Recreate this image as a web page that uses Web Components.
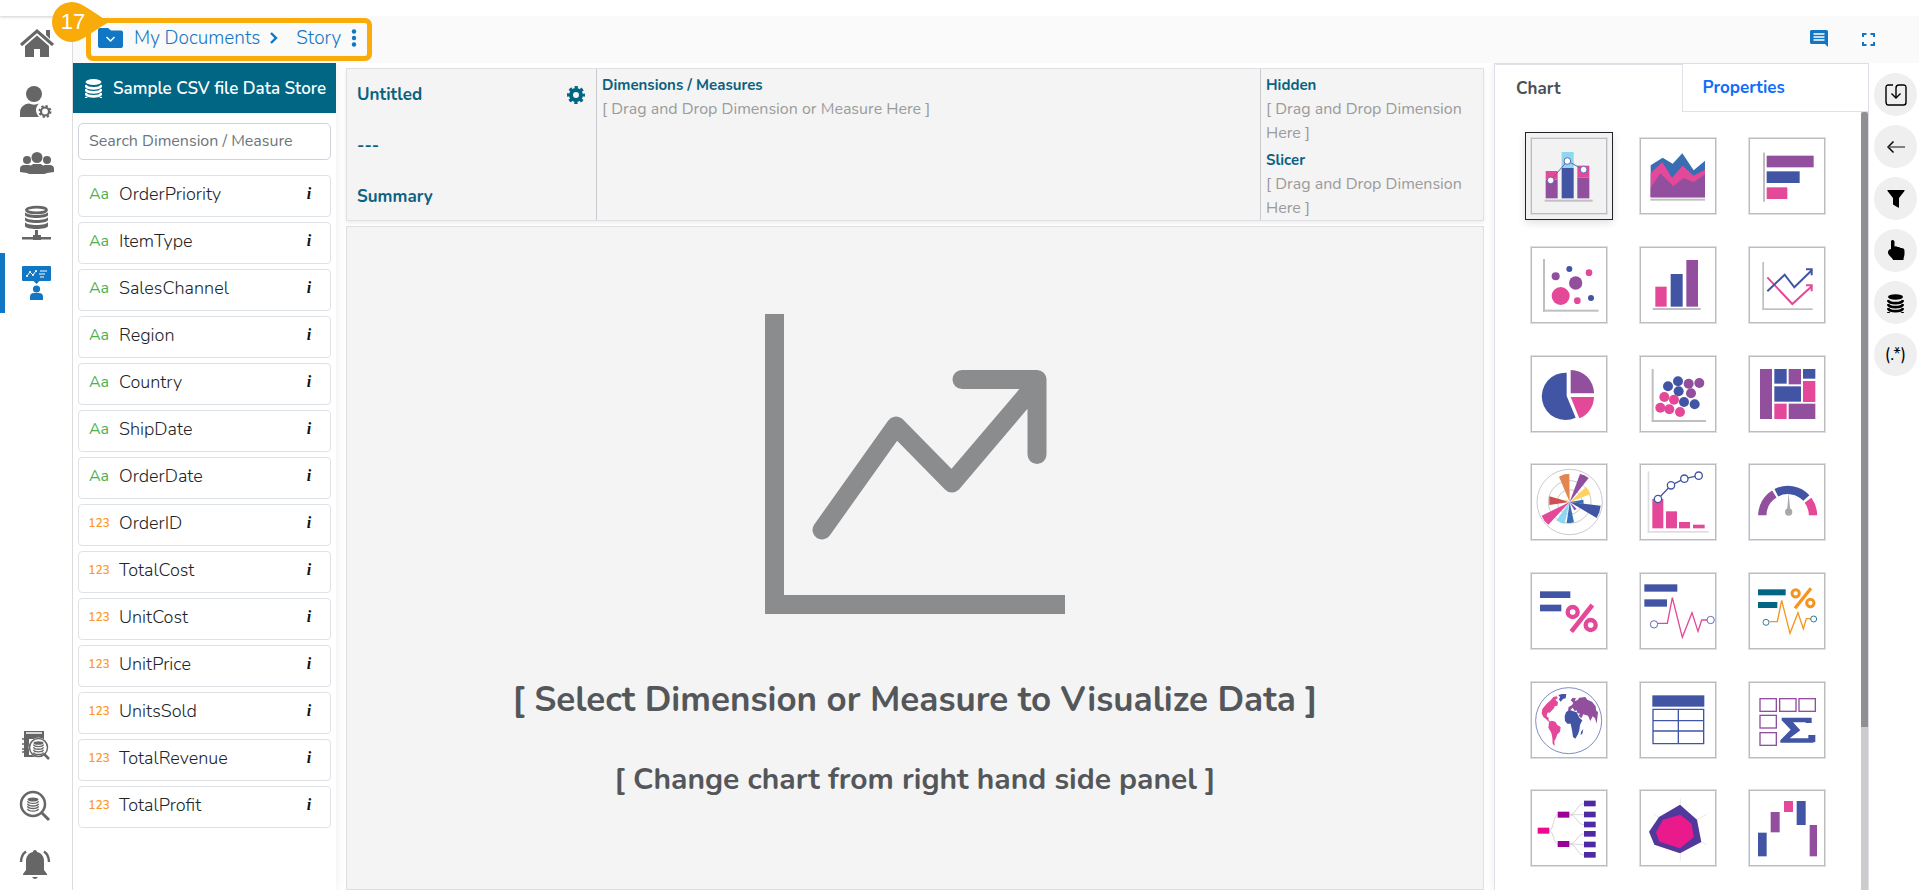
<!DOCTYPE html>
<html lang="en">
<head>
<meta charset="utf-8">
<title>Story designer</title>
<style>
  html, body { margin: 0; height: 100%; }
  body { font-family: Nunito, "Open Sans", "Noto Sans", sans-serif; font-size: 16px; color: #212529; background: #fff; overflow: hidden; }
</style>
</head>
<body>
<story-app></story-app>

<script>
const GREY = '#666';
const BLUE = '#1177c4';

/* Base class: clones the markup of each element into an open shadow root. */
class Base extends HTMLElement {
  constructor() { super(); this.attachShadow({ mode: 'open' }); }
  connectedCallback() {
    const t = document.createElement('template');
    t.innerHTML = '<style>*{box-sizing:border-box}button{font:inherit;color:inherit;background:none;border:0;padding:0;cursor:pointer}svg{display:block}' + this.css() + '</style>' + this.html();
    this.shadowRoot.replaceChildren(t.content.cloneNode(true));
  }
  css() { return ''; }
  html() { return '<slot></slot>'; }
}
const stack = (x, y, w, gap, n, c, sw) => {
  let s = `<ellipse cx="${x}" cy="${y}" rx="${w}" ry="${w * .36}" fill="${c}"/>`;
  for (let i = 1; i <= n; i++) s += `<path d="M${x - w} ${y + gap * i - 1}c1 ${w * .55} ${2 * w - 1} ${w * .55} ${2 * w} 0" fill="none" stroke="${c}" stroke-width="${sw}"/>`;
  return s;
};

/* ---------- left navigation ---------- */
class NavItem extends Base {
  css() { return `:host{display:block;height:var(--cell,60px)}
    button{width:100%;height:100%;display:flex;align-items:center;justify-content:center;border-left:5px solid transparent;border-right:5px solid transparent}
    :host([active]) button{border-left-color:${BLUE}}`; }
  html() { return `<button type="button" aria-label="${this.getAttribute('label')}"><slot></slot></button>`; }
}
class SideNav extends Base {
  css() { return `:host{display:flex;flex-direction:column;justify-content:space-between;width:73px;border-right:1px solid #dcdcdc;background:#fff}
    nav{display:flex;flex-direction:column}
    .top{margin-top:-3px}
    .bottom{--cell:50px;gap:10px}
    svg{width:36px;height:36px}`; }
  html() { return `
    <nav class="top" aria-label="Main">
      <nav-item label="Home"><svg viewBox="0 0 36 36" fill="${GREY}"><path d="M28 5h4v9l-4-4z"/><path d="M3 20 19 6l16 14" fill="none" stroke="${GREY}" stroke-width="3"/><path d="M7 21 19 10.500l12 10.500v11h-9v-8h-6v8H7z"/></svg></nav-item>
      <nav-item label="User settings"><svg viewBox="0 0 36 36" fill="${GREY}"><circle cx="16" cy="9" r="8"/><path d="M2 32v-4c0-6 4-9 9-9.500 3 1.500 7 1.500 10 0-4 4-4 9 0 13.500z"/><circle cx="27" cy="26.500" r="4" fill="none" stroke="${GREY}" stroke-width="2.200"/><circle cx="27" cy="26.500" r="5.500" fill="none" stroke="${GREY}" stroke-width="2" stroke-dasharray="2.300 2"/></svg></nav-item>
      <nav-item label="Groups"><svg viewBox="0 0 36 36" fill="${GREY}"><circle cx="19" cy="12.500" r="5.500"/><circle cx="9" cy="15" r="4"/><circle cx="29" cy="15" r="4"/><path d="M2 27v-3c0-3 2-4 4-4h5c2 1 3 0 4-1h8c1 1 2 2 4 1h5c2 0 4 1 4 4v3l-7 1c-1 1-3 1-10 1s-9 0-10-1z"/></svg></nav-item>
      <nav-item label="Data sources"><svg viewBox="0 0 36 36" fill="${GREY}"><ellipse cx="18.500" cy="5" rx="10" ry="2.800" fill="#fff" stroke="${GREY}" stroke-width="2.800"/>
        <path d="M7 7c1 4 22 4 23 0v3c0 4-23 4-23 0zM7 12c1 4 22 4 23 0v3c0 4-23 4-23 0zM7 17c1 4 22 4 23 0v4c0 4-23 4-23 0z"/><path d="M17 25h3v5h3v2h10v2.500h-10V35h-8v-.5H4V32h11v-2h2z"/></svg></nav-item>
      <nav-item label="Story" active><svg viewBox="0 0 36 36" fill="${BLUE}"><path d="M5 1h27q1 0 1 1v13q0 1-1 1H21.500l-3 3-3-3H5q-1 0-1-1V2q0-1 1-1z"/><path d="m9 11 3-4 3 3 3-4m4 0h7m-8 3h6m-5 3h4" fill="none" stroke="#fff"/><circle cx="9" cy="11" r="1" fill="#fff"/><circle cx="12" cy="7" r="1" fill="#fff"/><circle cx="15" cy="10" r="1" fill="#fff"/><circle cx="18" cy="6" r="1" fill="#fff"/><circle cx="18.500" cy="24" r="3.600"/><path d="M12 35v-3q0-4 4-4h5q4 0 4 4v3z"/></svg></nav-item>
    </nav>
    <nav class="bottom" aria-label="Tools">
      <nav-item label="Data catalog"><svg viewBox="0 0 36 36" fill="${GREY}"><path d="M6 4h20v8H10v18H6z"/><path d="M8 6h16" stroke="#fff" stroke-width="1.500"/><path d="M7 28h12v2H7zM6 10h5v18H6z"/><g fill="none" stroke="${GREY}" stroke-width="1.600"><path d="M4 12h5M4 17h5M4 22h5M4 25h5"/></g><circle cx="20.500" cy="20.500" r="10" fill="#fff"/><circle cx="20.500" cy="20.500" r="9" fill="#fff" stroke="${GREY}" stroke-width="1.500"/><path d="m26 27 5 5" stroke="${GREY}" stroke-width="2.500"/>${stack(20.5, 16, 5, 2.6, 4, GREY, 1.4)}</svg></nav-item>
      <nav-item label="Data search"><svg viewBox="0 0 36 36"><circle cx="15" cy="17" r="12" fill="none" stroke="${GREY}" stroke-width="2.500"/><path d="m24 26 7 7" stroke="${GREY}" stroke-width="3"/>${stack(15, 12.5, 5.5, 2.6, 4, GREY, 1.4)}</svg></nav-item>
      <nav-item label="Notifications"><svg viewBox="0 0 36 36" fill="${GREY}"><path d="M17 3c1.500 0 2 1 2 2 5 1 7 5 7 9v9l3 4v1H5v-1l3-4v-9c0-4 2-8 7-9 0-1 .5-2 2-2zM14 30h6q-3 4-6 0z"/><path d="M3 15q0-7 5-10.500M31 15q0-7-5-10.500" fill="none" stroke="${GREY}" stroke-width="2.400"/></svg></nav-item>
    </nav>`; }
}

/* ---------- breadcrumb bar ---------- */
class StepCallout extends Base {
  css() { return `:host{display:block;position:relative;border:5px solid #f8ab09;border-radius:7px}
    .pin{position:absolute;left:-43px;top:-22px;width:62px;height:42px}
    .pin svg{position:absolute;inset:0}
    .pin span{position:relative;display:block;width:50px;line-height:42px;text-align:center;font-family:"Liberation Sans",Arial,sans-serif;font-size:22px;color:#fff}`; }
  html() { return `<slot></slot><div class="pin"><svg viewBox="0 0 62 42" width="62" height="42"><path d="M24 1C34 1 46 12 61 21 46 29 34 41 24 41a20 20 0 0 1 0-40z" fill="#f8ab09"/></svg><span>${this.getAttribute('step')}</span></div>`; }
}
class CrumbBar extends Base {
  css() { return `:host{display:flex;align-items:flex-start;justify-content:space-between;height:47px;padding:2px 44px 0 13px;background:#fafafa;color:${BLUE}}
    nav{display:flex;align-items:center;height:33px;padding:0 9px 4px 7px;font-size:19px;font-weight:300;line-height:24px}
    a{color:inherit;text-decoration:none}
    .folder{margin-right:11px}.chev{margin:0 18px 0 10px}.more{margin-left:9px}
    .tools{display:flex;gap:34px;padding-top:12px}`; }
  html() { return `
    <step-callout step="17"><nav aria-label="Breadcrumb">
      <svg class="folder" width="25" height="20" viewBox="0 0 25 20"><path d="M2 0h8l3 2.500h10q2 0 2 2V18q0 2-2 2H2q-2 0-2-2V2q0-2 2-2z" fill="${BLUE}"/><path d="m8.500 9 4 4 4-4" fill="none" stroke="#fff" stroke-width="1.500"/></svg>
      <a href="#documents">My Documents</a>
      <svg class="chev" width="8" height="12" viewBox="0 0 8 12"><path d="m1 1 5 5-5 5" fill="none" stroke="${BLUE}" stroke-width="2.400"/></svg>
      <a href="#story">Story</a>
      <button class="more" type="button" aria-label="More"><svg width="8" height="18" viewBox="0 0 8 18" fill="${BLUE}"><circle cx="4" cy="2.500" r="2.200"/><circle cx="4" cy="9" r="2.200"/><circle cx="4" cy="15.500" r="2.200"/></svg></button>
    </nav></step-callout>
    <div class="tools">
      <button type="button" aria-label="Comments"><svg width="18" height="18" viewBox="0 0 18 18"><path d="M1.500 0h15q1.500 0 1.500 1.500V17l-3-3H1.500Q0 14 0 12.500v-11Q0 0 1.500 0z" fill="${BLUE}"/><path d="M3.500 4h11M3.500 7h11M3.500 10h11" stroke="#fff" stroke-width="1.300"/></svg></button>
      <button type="button" aria-label="Full screen"><svg width="13" height="17" viewBox="0 0 13 17"><path d="M1 6V3h3.500M8.500 3H12v3M12 11v3H8.500M4.500 14H1v-3" fill="none" stroke="${BLUE}" stroke-width="2"/></svg></button>
    </div>`; }
}

/* ---------- data store fields ---------- */
class FieldItem extends Base {
  css() { return `:host{display:grid;grid-template-columns:40px 1fr 30px;height:42px;border:1px solid #dee2e6;border-radius:4px;background:#fff;line-height:24px;padding-top:6px;align-items:start}
    .type{text-align:center;color:#4caf50;font-size:16px}
    .type.num{color:#fd9727;font-size:12px;font-weight:600}
    .name{font-size:18px;font-weight:300}
    button{width:18px;height:24px;font:italic bold 16px/24px "Liberation Serif",serif;color:#111}`; }
  html() { const num = this.getAttribute('type') === '123';
    return `<span class="type ${num ? 'num' : ''}">${this.getAttribute('type')}</span><span class="name"><slot></slot></span><button type="button" aria-label="Field info">i</button>`; }
}
class FieldPanel extends Base {
  css() { return `:host{display:block;width:263px;background:#fff;box-shadow:0 0 10px rgba(0,0,0,.08)}
    h2{display:flex;align-items:center;height:50px;margin:0;padding-left:12px;gap:11px;background:#006684;color:#fff;font-size:17px;font-weight:600;white-space:nowrap}
    .body{display:flex;flex-direction:column;gap:5px;padding:10px 5px 0}
    input{width:100%;height:37px;margin-bottom:10px;padding:0 10px 2px;border:1px solid #ced4da;border-radius:5px;font:inherit;font-size:16px;outline:0}
    input::placeholder{color:#6c757d;opacity:1}`; }
  html() {
    const dims = ['OrderPriority', 'ItemType', 'SalesChannel', 'Region', 'Country', 'ShipDate', 'OrderDate'];
    const nums = ['OrderID', 'TotalCost', 'UnitCost', 'UnitPrice', 'UnitsSold', 'TotalRevenue', 'TotalProfit'];
    return `<h2><svg width="17" height="20" viewBox="0 0 17 20">${stack(8.500, 4, 8, 4, 4, '#fff', 2.8)}</svg>Sample CSV file Data Store</h2>
    <div class="body"><input type="search" aria-label="Search Dimension / Measure" placeholder="Search Dimension / Measure">
    ${dims.map(n => `<field-item type="Aa">${n}</field-item>`).join('')}${nums.map(n => `<field-item type="123">${n}</field-item>`).join('')}</div>`; }
}

/* ---------- chart configuration ---------- */
class DropZone extends Base {
  css() { return `:host{display:block;line-height:24px}
    h3{margin:0;font-size:15px;font-weight:700;color:#0b6180;line-height:24px}
    p{margin:0;font-size:16px;color:#9b9b9b}`; }
  html() { return `<h3>${this.getAttribute('label')}</h3><p><slot></slot></p>`; }
}
class ConfigPanel extends Base {
  css() { return `:host{display:grid;grid-template-columns:249px 1fr 223px;height:153px;border:1px solid #dee2e6;background:#f4f4f4;box-shadow:0 2px 4px rgba(0,0,0,.08)}
    section{border-left:1px solid #c9cacc;padding:4px 0 0 5px;min-width:0}
    .summary{border:0;padding:14px 10px 0 10px;display:flex;flex-direction:column;gap:27px;color:#0b6180;font-size:17px;font-weight:700;line-height:24px}
    .row{display:flex;justify-content:space-between;align-items:center}
    drop-zone + drop-zone{margin-top:3px}`; }
  html() { return `
    <section class="summary"><div class="row"><span>Untitled</span><button type="button" aria-label="Settings"><svg width="20" height="20" viewBox="0 0 20 20" fill="none" stroke="#006684"><circle cx="10" cy="10" r="5" stroke-width="4"/><circle cx="10" cy="10" r="7.500" stroke-width="3" stroke-dasharray="3.200 2.690" stroke-dashoffset="1.600"/></svg></button></div><span>---</span><span>Summary</span></section>
    <section><drop-zone label="Dimensions / Measures">[ Drag and Drop Dimension or Measure Here ]</drop-zone></section>
    <section><drop-zone label="Hidden">[ Drag and Drop Dimension Here ]</drop-zone><drop-zone label="Slicer">[ Drag and Drop Dimension Here ]</drop-zone></section>`; }
}
class ChartCanvas extends Base {
  css() { return `:host{display:flex;flex-direction:column;align-items:center;flex:1;min-height:0;border:1px solid #dcdfe3;background:#f4f4f4;color:#54575a;text-align:center;padding-top:87px}
    p{margin:0;font-weight:700}
    .big{margin-top:62px;font-size:35px;line-height:48px}
    .small{margin-top:34px;font-size:30px;line-height:44px}`; }
  html() { return `
    <svg width="300" height="300" viewBox="0 0 300 300" fill="none" stroke="#8b8c8e" stroke-width="19"><path d="M9.500 0v290.500H300"/><path d="m57 216 74-104 56 57 85-100M197 65.500h75v75" stroke-linecap="round" stroke-linejoin="round"/></svg>
    <p class="big">[ Select Dimension or Measure to Visualize Data ]</p>
    <p class="small">[ Change chart from right hand side panel ]</p>`; }
}

/* ---------- chart picker ---------- */
const B = '#4255a4', V = '#914f9e', P = '#e44898', M = '#3b6db3', L = '#8fd6f1', T = '#006684', O = '#f7941e', G = '#bfbfbf';
const r = (x, y, w, h, c) => `<rect x="${x}" y="${y}" width="${w}" height="${h}" fill="${c}"/>`;
const c = (pts, rad, col) => pts.map(p => `<circle cx="${p[0]}" cy="${p[1]}" r="${rad}" fill="${col}"/>`).join('');
const o = (pts, rad, col, w) => pts.map(p => `<circle cx="${p[0]}" cy="${p[1]}" r="${rad}" fill="#fff" stroke="${col}" stroke-width="${w}"/>`).join('');
const pg = (pts, col) => `<polygon points="${pts}" fill="${col}"/>`;
const pl = (pts, col, w) => `<polyline points="${pts}" fill="none" stroke="${col}" stroke-width="${w}"/>`;
const wedge = (pts, col) => pg('119,117 ' + pts, col);
const link = (x1, y1, x2, y2) => `<path d="M${x1} ${y1}C${(x1 + x2) / 2} ${y1} ${(x1 + x2) / 2} ${y2} ${x2} ${y2}" fill="none" stroke="#d4d4d4" stroke-width="3"/>`;
const CHARTS = [
  ['Combination', r(47,102,36,26,P)+r(47,128,36,56,V)+r(95,45,36,48,L)+r(95,93,36,91,B)+r(142,86,36,36,P)+r(142,122,36,62,V)+r(44,188,144,6,G)+pl('62,130 112,72 161,98','#5a6ab0',3)+o([[62,130],[112,72],[161,98]],10,'#5a6ab0',3)],
  ['Area', pg('35,85 71,62 101,80 130,49 164,100 198,71 198,181 35,181',M)+pg('35,108 70,76 99,122 131,86 164,116 198,98 198,181 35,181',P)+pg('35,152 64,109 103,148 134,123 164,136 198,112 198,181 35,181',V)+r(34,185,164,6,G)],
  ['Bar', r(45,47,6,147,G)+r(56,56,141,35,V)+r(56,103,99,35,B)+r(56,151,62,35,P)],
  ['Bubble', r(39,39,6,158,G)+r(39,191,167,6,G)+c([[77,91]],12,V)+c([[118,69],[183,156]],9,B)+c([[177,80],[142,164]],10,P)+c([[137,111]],20,V)+c([[92,150]],27,P)],
  ['Column', r(49,122,34,60,P)+r(95,84,36,98,B)+r(142,42,35,140,V)+r(41,186,144,6,G)],
  ['Line', r(43,48,5,143,G)+r(43,187,151,5,G)+pl('58,94 133,174 192,120',P,6)+pl('174,118 191,118 191,136',P,6)+pl('58,136 110,86 139,124 192,72',B,6)+pl('174,70 191,70 191,88',B,6)],
  ['Pie', `<path d="M110 53A71 71 0 1 0 137 188L110 123z" fill="${B}"/><path d="M122 45a70 70 0 0 1 70 70h-70z" fill="${V}"/><path d="M122 126h70a70 70 0 0 1-44 64z" fill="${P}"/>`],
  ['Scatter', r(38,42,6,158,G)+r(38,195,163,6,G)+c([[87,94],[117,79],[119,109],[135,141],[167,148]],15,B)+c([[149,86],[181,84],[156,115]],15,V)+c([[76,126],[105,134],[64,158],[91,163],[123,171]],15,P)],
  ['Tree map', r(36,42,36,150,V)+r(79,42,37,44,B)+r(122,42,37,46,V)+r(165,42,37,29,B)+r(165,78,37,63,P)+r(79,94,80,46,B)+r(79,146,37,46,P)+r(122,146,80,46,V)],
  ['Rose', o([[119,117]],98,G,2.5)+o([[119,117]],64,G,2.5)+o([[119,117]],37,G,2.5)+wedge('87,41 103,34 118,33','#e38550')+wedge('150,33 163,37 176,45',V)+wedge('168,72 176,82 181,94','#ffd162')+wedge('160,110 161,122',M)+wedge('212,128 208,148 200,165',B)+wedge('133,142 140,138',V)+wedge('79,172 92,179 104,182',L)+wedge('110,180 121,180 132,178',M)+wedge('35,158 43,173 55,185',P)+wedge('58,100 58,126','#cf4e50')+wedge('106,108 110,118','#ffd162')],
  ['Pareto', r(26,25,5,185,'#ddd')+r(26,204,183,5,'#ddd')+r(40,108,33,88,P)+r(81,145,33,51,P)+r(120,177,33,19,P)+r(162,185,35,11,P)+pl('57,108 96,67 136,47 179,38',B,4)+o([[57,108],[96,67],[136,47],[179,38]],11,B,4)],
  ['Gauge', `<g fill="none" stroke-width="25"><path d="M43 157A76 76 0 0 1 79 93" stroke="${V}"/><path d="M85 89A76 76 0 0 1 175 105" stroke="${B}"/><path d="M180 112A76 76 0 0 1 195 157" stroke="${P}"/></g>`+pg('122,90 117,145 127,145','#a7a9ac')+c([[122,147]],11,'#a7a9ac')],
  ['Percent KPI', r(30,58,91,20,B)+r(30,98,64,20,B)+o([[128,120],[182,159]],15,P,13)+pl('187,99 124,179',P,14)],
  ['Trend KPI', r(16,37,99,22,B)+r(16,82,68,22,B)+pl('56,154 85,154 100,77 130,196 159,122 177,178 188,144 204,144',P,4)+o([[45,157],[215,144]],11,B,2.5)],
  ['Multi KPI', r(30,52,83,18,T)+r(30,90,58,18,T)+o([[143,64],[187,93]],11,O,9)+pl('189,49 141,109',O,10)+pl('65,149 88,149 101,85 126,184 150,122 166,170 175,140 188,140',O,4)+o([[54,151],[197,141]],9,T,2.5)],
  ['World map', `<circle cx="116" cy="119" r="99" fill="none" stroke="${B}" stroke-width="2"/>`+pg('85,42 96,39 109,39 107,52 99,54 92,62 87,56 90,48',B)+pg('35,97 37,84 50,68 62,58 70,48 80,46 83,52 76,56 84,64 82,74 74,76 72,82 64,90 58,96 54,94 50,102 52,108 56,110 56,118 63,122 56,122 48,114 40,108',P)+pg('57,124 65,119 76,122 82,132 92,138 90,152 82,160 78,172 73,180 74,195 68,188 67,170 64,156 55,140',P)+pg('108,94 118,86 128,90 140,94 148,110 157,118 150,132 148,148 144,160 136,173 129,168 126,148 122,128 112,128 105,120 104,106',B)+pg('153,152 160,144 157,158 152,162',B)+pg('122,58 128,50 138,52 134,60 142,58 148,50 166,48 172,56 186,62 197,76 198,88 204,94 202,110 200,128 195,112 188,106 181,120 174,104 160,100 154,112 146,104 150,98 142,96 140,88 134,90 128,80 118,90 114,88 116,78 126,72 130,66',V)],
  ['Table', r(40,43,156,34,B)+`<path d="M42 85h152v103H42zM42 119h152M42 150h152M118 85v103" fill="none" stroke="${B}" stroke-width="4"/>`],
  ['Pivot', [[36,53],[95,53],[153,53],[36,103],[36,155]].map(p => `<rect x="${p[0]}" y="${p[1]}" width="49" height="38" fill="none" stroke="${V}" stroke-width="4"/>`).join('')+pg('101,110 191,110 191,126 174,126 172,124 135,124 157,148 125,172 181,172 181,162 202,162 202,182 194,185 97,185 97,178 128,146 101,118',B)],
  ['Decomposition tree', link(58,125,83,77)+link(58,125,83,165)+[44,77,107].map(y => link(118,77,162,y)).join('')+[135,167,198].map(y => link(118,165,162,y)).join('')+r(23,116,35,18,'#ec0a92')+r(83,68,35,18,'#9c0099')+r(83,156,35,18,'#9c0099')+[35,68,98,126,158,189].map(y => r(162,y,35,17,'#4d29a3')).join('')],
  ['Radar', `<path d="M124 28v187M43 75l160 93M204 75 124 120" stroke="#ddd" stroke-width="2"/>`+pg('123,47 174,92 187,159 123,193 46,167 30,128 60,84','#50399a')+pg('124,77 158,104 164,145 123,178 61,158 51,130 72,92','#e91a8c')],
  ['Waterfall', r(30,131,26,71,B)+r(68,69,27,61,V)+r(108,36,27,33,P)+r(146,36,27,72,B)+r(185,108,22,94,V)]
];
class ChartTile extends Base {
  css() { return `:host{display:flex;align-items:center;justify-content:center;aspect-ratio:1}
    button{width:88px;height:88px;display:grid;place-items:center;border:1px solid transparent}
    span{display:grid;place-items:center;width:78px;height:78px;border:1px solid #dcdfe3;box-shadow:inset 0 0 0 1px #bcbcbe}
    ::slotted(svg){margin:-1px}
    :host([selected]) button{border-color:#212529;background:#f2f2f2;box-shadow:0 3px 8px rgba(0,0,0,.12)}`; }
  html() { return `<button type="button" aria-label="${this.getAttribute('label')}"><span><slot></slot></span></button>`; }
}
class ChartPicker extends Base {
  css() { return `:host{display:flex;flex-direction:column;width:375px;border:1px solid #dcdfe5;border-bottom:0;background:#fff;box-shadow:0 0 10px rgba(0,0,0,.08)}
    .tabs{display:grid;grid-template-columns:1fr 1fr;height:48px}
    .tabs button{padding:0 0 0 20px;text-align:left;font-size:17px;font-weight:700;color:#0d6efd;border-left:1px solid #dee2e6;border-bottom:1px solid #dee2e6}
    .tabs button[aria-selected=true]{color:#495057;border-left-color:transparent;border-bottom:0;border-top:1px solid #dee2e6}
    .scroll{flex:1;min-height:0;display:flex}
    .grid{flex:1;display:grid;grid-template-columns:repeat(3,1fr);align-content:start;padding:10px 20px 0;overflow:hidden}
    .bar{width:7px;background:#ccc}
    .bar div{height:79%;background:#909090;border-radius:3px 3px 0 0}
    svg{width:78px;height:78px}`; }
  html() { return `<div class="tabs" role="tablist"><button type="button" role="tab" aria-selected="true">Chart</button><button type="button" role="tab" aria-selected="false">Properties</button></div>
    <div class="scroll"><div class="grid">${CHARTS.map((d, i) => `<chart-tile label="${d[0]}"${i ? '' : ' selected'}><svg viewBox="0 0 234 234">${d[1]}</svg></chart-tile>`).join('')}</div><div class="bar"><div></div></div></div>`; }
}

/* ---------- tool rail ---------- */
class ToolButton extends Base {
  css() { return `:host{display:block}button{width:43px;height:43px;border-radius:50%;background:#efefef;display:grid;place-items:center;color:#000;font-size:17px}`; }
  html() { return `<button type="button" aria-label="${this.getAttribute('label')}"><slot></slot></button>`; }
}
class ToolRail extends Base {
  css() { return `:host{display:flex;flex-direction:column;gap:9px;width:50px;padding:10px 0 0 5px;background:#fff}`; }
  html() { return `
    <tool-button label="Export"><svg width="22" height="22" viewBox="0 0 22 22" fill="none" stroke="#000" stroke-width="1.400"><path d="M8 1H3.500Q1 1 1 3.500v14Q1 21 3.500 21h15q2.500 0 2.500-2.500v-15Q21 1 18.500 1H14q-3 0-3 3v10"/><path d="m6.500 9.500 4.500 4.500 4.500-4.500"/></svg></tool-button>
    <tool-button label="Back"><svg width="18" height="14" viewBox="0 0 18 14" fill="none" stroke="#000"><path d="M6.500 1.500 1 7l5.500 5.500" stroke-width="1.500"/><path d="M1 7h17" stroke-width="1.300" stroke="#444"/></svg></tool-button>
    <tool-button label="Filter"><svg width="18" height="20" viewBox="0 0 18 20"><path d="M1 1h16q1 0 .5 1L12 9v9q0 1-1 .500L6 15.500V9L.5 2Q0 1 1 1z"/></svg></tool-button>
    <tool-button label="Interaction"><svg width="18" height="22" viewBox="0 0 18 22"><path d="M5.500 0C7 0 7.500 1 7.500 2v4.500q2-.5 3 .5 2-.5 3 1 4-.5 4 3v3c0 2-1 3-1 6H6c0-2-5-4.500-5-7.500 0-1.500.5-3 3-3.500V2c0-1 0-2 1.500-2z"/></svg></tool-button>
    <tool-button label="Data store"><svg width="17" height="20" viewBox="0 0 17 20">${stack(8.500, 4, 7.500, 4, 4, '#000', 2.8)}</svg></tool-button>
    <tool-button label="Expression">(.*)</tool-button>`; }
}

class StoryApp extends Base {
  css() { return `:host{display:grid;grid-template:16px 47px minmax(0,1fr) / 73px minmax(0,1fr);height:100vh}
    .strip{grid-column:1/3;background:#fff;box-shadow:0 1px 3px rgba(0,0,0,.2);z-index:1}
    side-nav{grid-row:2/4}
    crumb-bar{z-index:2}
    main{display:flex;min-height:0;overflow:hidden}
    .work{flex:1;min-width:0;display:flex;flex-direction:column;gap:5px;margin:5px 10px 0}`; }
  html() { return `<div class="strip"></div><side-nav></side-nav><crumb-bar></crumb-bar>
    <main><field-panel></field-panel><div class="work"><config-panel></config-panel><chart-canvas></chart-canvas></div><chart-picker></chart-picker><tool-rail></tool-rail></main>`; }
}

for (const [name, cls] of Object.entries({
  'nav-item': NavItem, 'side-nav': SideNav, 'step-callout': StepCallout, 'crumb-bar': CrumbBar, 'field-item': FieldItem,
  'field-panel': FieldPanel, 'drop-zone': DropZone, 'config-panel': ConfigPanel, 'chart-canvas': ChartCanvas,
  'chart-tile': ChartTile, 'chart-picker': ChartPicker, 'tool-button': ToolButton, 'tool-rail': ToolRail, 'story-app': StoryApp
})) customElements.define(name, cls);
</script>
</body>
</html>
